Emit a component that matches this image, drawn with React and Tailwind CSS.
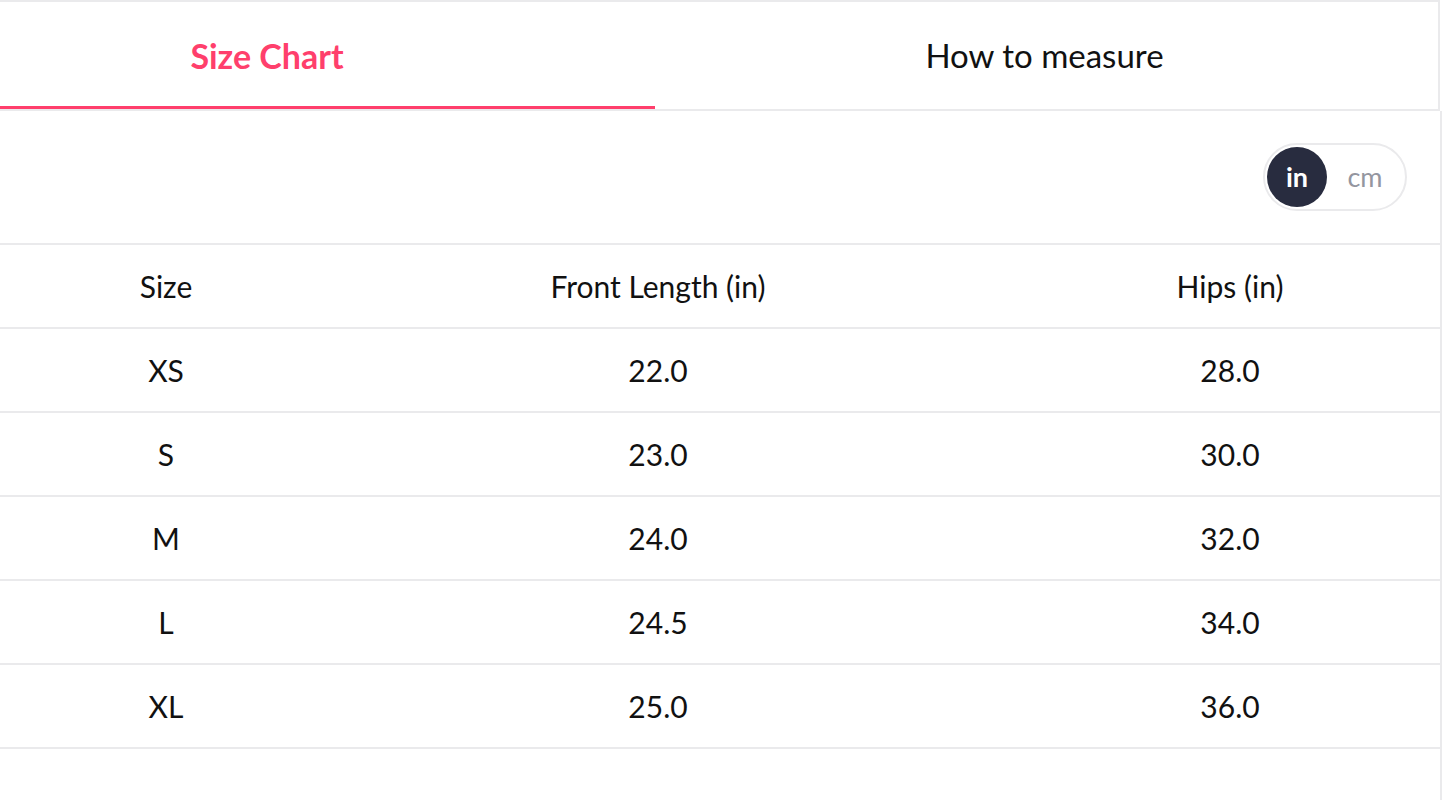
import { useState } from "react";

const linhas = [
  { size: "XS", front: "22.0", hips: "28.0" },
  { size: "S", front: "23.0", hips: "30.0" },
  { size: "M", front: "24.0", hips: "32.0" },
  { size: "L", front: "24.5", hips: "34.0" },
  { size: "XL", front: "25.0", hips: "36.0" },
];

export default function App() {
  const [aba, setAba] = useState("chart");
  const [unidade, setUnidade] = useState("in");

  return (
    <div
      className="w-[1442px] h-[800px] bg-white text-[#111] overflow-hidden"
      style={{ fontFamily: "Lato, 'Open Sans', sans-serif" }}
    >
      {/* abas */}
      <div className="w-[1440px] flex border-t-2 border-r-2 border-b-2 border-[#eaeaec] h-[111px]">
        <button
          className="relative w-[655px] h-full flex items-center"
          onClick={() => setAba("chart")}
        >
          <span
            className={`w-[534px] text-center text-[34px] font-bold ${
              aba === "chart" ? "text-[#ff3f6c]" : "text-[#111]"
            }`}
          >
            Size Chart
          </span>
          {aba === "chart" && (
            <span className="absolute left-0 bottom-0 w-full h-[3px] bg-[#ff3f6c]" />
          )}
        </button>
        <button
          className="flex-1 h-full flex items-center justify-center pr-[4px]"
          onClick={() => setAba("measure")}
        >
          <span className="text-[33px]">How to measure</span>
        </button>
      </div>

      <div className="border-r-2 border-[#eaeaec] h-[689px]">
        {/* toggle unidade */}
        <div className="h-[134px] flex items-center justify-end pr-[33px] border-b-2 border-[#eaeaec]">
          <div className="w-[144px] h-[68px] rounded-full border-2 border-[#eaeaec] flex items-center p-[2px]">
            <button
              onClick={() => setUnidade("in")}
              className={`w-[60px] h-[60px] rounded-full flex items-center justify-center text-[27px] font-bold ${
                unidade === "in" ? "bg-[#282c3f] text-white" : "text-[#94969f]"
              }`}
            >
              in
            </button>
            <button
              onClick={() => setUnidade("cm")}
              className={`flex-1 h-[60px] rounded-full flex items-center justify-center text-[27px] ${
                unidade === "cm" ? "bg-[#282c3f] text-white font-bold" : "text-[#94969f]"
              }`}
            >
              cm
            </button>
          </div>
        </div>

        {/* tabela */}
        <div className="text-[30px]">
          <div className="grid grid-cols-[332px_652px_1fr] h-[84px] items-center border-b-2 border-[#eaeaec]">
            <div className="text-center">Size</div>
            <div className="text-center">Front Length ({unidade})</div>
            <div className="text-center pl-[36px]">Hips ({unidade})</div>
          </div>
          {linhas.map((l) => (
            <div
              key={l.size}
              className="grid grid-cols-[332px_652px_1fr] h-[84px] items-center border-b-2 border-[#eaeaec]"
            >
              <div className="text-center">{l.size}</div>
              <div className="text-center">{l.front}</div>
              <div className="text-center pl-[36px]">{l.hips}</div>
            </div>
          ))}
        </div>
      </div>
    </div>
  );
}
